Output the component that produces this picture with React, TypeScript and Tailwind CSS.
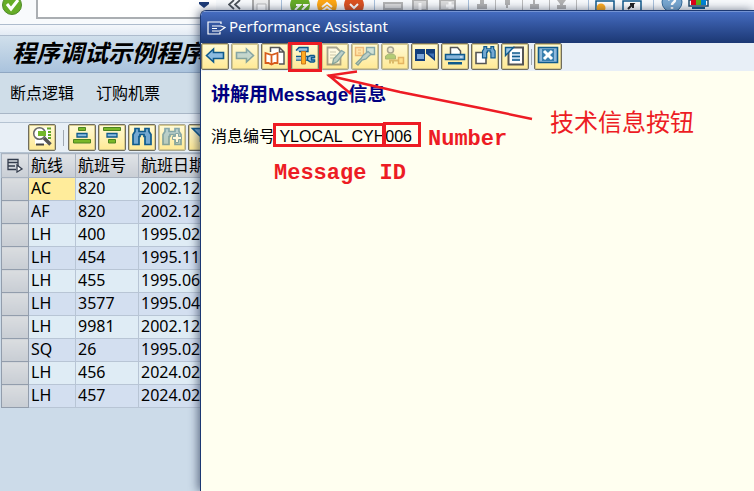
import type { ReactNode } from "react";

const NAVY = "#0f5a8c";
const SKY = "#9fc3e0";

function IconButton({ label, dim = false, children }: { label: string; dim?: boolean; children: ReactNode }) {
  return (
    <button
      type="button"
      aria-label={label}
      title={label}
      className={`h-[27px] w-7 shrink-0 overflow-hidden rounded-xs border bg-linear-to-b from-[#fffad6] to-[#ffe993] shadow-[inset_0_0_0_1px_#d5c88a] ${
        dim ? "border-[#aaa78f]" : "border-[#6f6c5e]"
      }`}
    >
      <svg viewBox="1 1 26 25" className={`block h-[25px] w-[26px] ${dim ? "opacity-50" : ""}`} fill="none">
        {children}
      </svg>
    </button>
  );
}

const Separator = () => <span className="h-4 w-px shrink-0 bg-[#a0a8b2]" />;

const BackIcon = () => (
  <path d="M5.5 12.5 12.5 6v3.5h10v6h-10V19Z" fill="#8bbbe0" stroke={NAVY} strokeWidth="1.6" />
);
const ForwardIcon = () => (
  <path d="M22.5 12.5 15.5 6v3.5h-10v6h10V19Z" fill="#8bbbe0" stroke={NAVY} strokeWidth="1.6" />
);
const BookIcon = () => (
  <>
    <path d="M9.500 9V4.500h9L23 9v12h-5" fill="#fff" />
    <path d="M9.500 9V4.500h9L23 9v12h-5M18.500 4.500V9H23" stroke="#555" strokeWidth="1.500" />
    <path d="m4.500 10 6 2 6-2v10h-3l-3 1.500-3-1.500h-3ZM10.500 12v9" fill="#fff" stroke="#d65a1a" strokeWidth="1.800" />
  </>
);
const ToolsIcon = () => (
  <>
    <path d="M5 13.500h12M5 17h12" stroke={NAVY} strokeWidth="1.400" />
    <path d="M5 14.500h13v2H5z" fill={SKY} />
    <path d="M23.500 12.500h-4l-3 1.500v3l3 2h4M23.500 12.500v2h-3v2.500h3v2" fill={SKY} stroke={NAVY} strokeWidth="1.500" />
    <path d="M5 7.500 8 4.500h9v4H8" fill={SKY} stroke={NAVY} strokeWidth="1.400" />
    <path d="M10.500 8.500h4v12.500h-4z" fill="#ffad22" stroke="#c9771a" />
  </>
);
const EditIcon = () => (
  <>
    <path d="M6.500 4.500h9l4 4v13h-13z" fill="#fff" stroke="#555" strokeWidth="1.800" />
    <path d="M9 9h6M9 12h6M9 15h4" stroke="#999" />
    <path d="m20.500 7.500 3 2-7 9-5 2.500 1-5Z" fill="#7eaed5" stroke={NAVY} strokeWidth="1.300" />
  </>
);
const StyleIcon = () => (
  <>
    <path d="M4.500 4.500h8v8h-8z" fill="#ffd38c" stroke="#db7b2a" strokeWidth="1.400" />
    <path d="M15.500 4.500h8v7h-8z" fill="#a5cfe8" stroke={NAVY} strokeWidth="1.400" />
    <path d="M7 7h3M7 10h3" stroke="#db7b2a" />
    <path d="m17 8.500 3 2.500-5 5-4 1-4 5-2-1.500 5-5 2-3Z" fill="#7eaed5" stroke={NAVY} strokeWidth="1.300" />
  </>
);
const UserKeyIcon = () => (
  <>
    <circle cx="9.500" cy="7" r="3" fill="#ddd" stroke="#555" strokeWidth="1.500" />
    <path d="M4.500 16v-3l3-2h5l2 2v3Z" fill="#69a832" stroke="#557a38" />
    <path d="M8 17.500h9M9 17.500v3M12 17.500v3" stroke="#b9882c" strokeWidth="2" />
    <path d="M17.500 14.500h5v6h-5z" fill="#ffd06b" stroke="#c97c1e" strokeWidth="1.500" />
  </>
);
const ApplicationIcon = () => (
  <>
    <path d="M4 6h10v12H4z" fill="#123f7d" />
    <path d="M6 11h7v5H6z" fill="#7ba6d8" />
    <path d="M14 6h10v12l-9-7.500Z" fill="#123f7d" />
    <path d="M17.500 10.500H23v4.500Z" fill="#3f72b8" />
    <path d="M14.500 6v12" stroke="#fff4b8" />
  </>
);
const PrinterIcon = () => (
  <>
    <path d="M9.500 11V4.500h7L19.500 8v3" fill="#fff" stroke="#555" strokeWidth="1.500" />
    <path d="M4.500 11.500h19v5h-19z" fill="#87b5db" stroke={NAVY} strokeWidth="1.500" />
    <path d="M19 14h2.500" stroke="#fff" />
    <path d="M7 19h14v2.500H7z" fill={NAVY} />
  </>
);
const Binoculars = () => (
  <path
    d="M7 4.500h4v3h6v-3h4v3l2 3v10h-6v-8h-1v-2h-4v2h-1v8H5v-10l2-3Z"
    fill="#75a9d2"
    stroke={NAVY}
    strokeWidth="1.700"
  />
);
const FindPageIcon = () => (
  <>
    <path d="M5 9.500h10v11H5z" fill="#fff" stroke="#555" strokeWidth="1.600" />
    <g transform="translate(8 0.500) scale(.7)">
      <Binoculars />
    </g>
  </>
);
const BinocularsPlusIcon = () => (
  <>
    <Binoculars />
    <path d="M17.500 9.500h3v3h3v3h-3v3h-3v-3h-3v-3h3z" fill="#fff" stroke={NAVY} />
  </>
);
const DocumentIcon = () => (
  <>
    <path d="M7.500 7V21.500H22V4.500H12" fill="#fff" stroke="#555" strokeWidth="2" />
    <path d="M11 10h8v8h-8z" fill="#c4dbef" />
    <path d="M11 10h8M11 13.500h8M11 17h8" stroke={NAVY} strokeWidth="1.300" />
    <path d="M4.500 4.500h8l-8 8Z" fill="#9bc7e8" stroke={NAVY} strokeWidth="1.400" />
  </>
);
const CloseIcon = () => (
  <>
    <path d="M4.500 4.500h19v15h-19z" fill="#8eb8db" stroke={NAVY} strokeWidth="1.600" />
    <path d="M8 6h12v12H8z" fill="#397fae" />
    <path d="m10 8 8 8M18 8l-8 8" stroke="#fff" strokeWidth="3" />
  </>
);
const DetailIcon = () => (
  <>
    <path d="M10 4h12v16H7v-5" fill="#fff" />
    <path d="M19 4.500h4M20 8h3M20 11h3M20 14h3" stroke="#62a629" strokeWidth="2" />
    <path d="M8 20.500h8" stroke="#444" strokeWidth="2" />
    <circle cx="11.500" cy="9.500" r="5.800" fill="#fff" stroke="#666" strokeWidth="1.500" />
    <path d="M10 7h8v5h-8z" fill="#72b72b" />
    <path d="m16 14 6.500 6.500" stroke="#555" strokeWidth="3.500" />
  </>
);
const AscendingIcon = () => (
  <>
    <path d="M10.500 3.500h7v3h-7z" fill="#79b728" stroke="#4c8420" />
    <path d="M9 9.500h10v3.500H9z" fill="#8dbde3" stroke={NAVY} strokeWidth="1.300" />
    <path d="M5.500 15.500h17v3.500h-17z" fill="#79b728" stroke="#4c8420" />
  </>
);
const DescendingIcon = () => (
  <>
    <path d="M5.500 3.500h17v3h-17z" fill="#79b728" stroke="#4c8420" />
    <path d="M9 9.500h10v3.500H9z" fill="#8dbde3" stroke={NAVY} strokeWidth="1.300" />
    <path d="M10.500 15.500h7v3.500h-7z" fill="#79b728" stroke="#4c8420" />
  </>
);
const FilterIcon = () => (
  <path d="M4.500 4.500h19l-7 8v8l-4-3v-5Z" fill="#75a9d2" stroke={NAVY} strokeWidth="1.600" />
);

/** Icons of the main system toolbar, whose lower part runs behind the dialog. */
function SystemIcons() {
  return (
    <svg viewBox="0 0 530 24" className="h-6 w-[530px] shrink-0" fill="none">
      <path d="M6 0 1 4.500 6 9M12 0 7 4.500 12 9" stroke="#4c5258" strokeWidth="1.700" />
      <path d="M25 0v14h16V0" fill="#eee" stroke="#aaa" strokeWidth="2" />
      <path d="M29 4h9v8h-9z" fill="#fff" stroke="#bbb" />
      <path d="M53.500 0v20M146.500 0v20M240.500 0v20M360.500 0v20M425.500 0v20" stroke="#a9c1dc" />
      <circle cx="72" cy="5" r="10" fill="#66ad26" />
      <path d="m67 10 5-5h-4M74 10l5-5h-4" stroke="#fff" strokeWidth="2" />
      <circle cx="99" cy="5" r="10" fill="#ffa713" />
      <path d="m94 7 5-4 5 4M94 11l5-4 5 4" stroke="#fff" strokeWidth="2" />
      <circle cx="126" cy="5" r="10" fill="#dc5120" />
      <path d="m122 4 4 4 4-4" stroke="#fff" strokeWidth="2" />
      <path d="M156 3h18v6h-18zM185 0h14v10h-14zM212 0h15v10h-15z" fill="#ddd" stroke="#b4b4b4" strokeWidth="2" />
      <path d="M192 3v8M222 2v7M218 6h8" stroke="#fff" strokeWidth="3" />
      <path d="M267.500 0v10M294.500 0v10M321.500 0v10M348.500 0v10" stroke="#bbb" />
      <path
        d="M252 0h4v4h3v5h-10V4h3zM277 0h5v5h-2v3h-2V5h-1zM305 0h2v4h4v5h-9V4h3zM329 0h9l-3 4v1h3v4h-9V5h3V4z"
        fill="#b2b2b2"
      />
      <path d="M368 1h18v12h-18zM395 1h18v12h-18z" fill="#fff" stroke={NAVY} strokeWidth="1.500" />
      <circle cx="373" cy="8" r="4.500" fill="#ffac20" />
      <path d="m400 9 5-5h-3m3 0v4" stroke="#222" strokeWidth="2" />
      <circle cx="444" cy="2" r="10" fill="#79a8d1" stroke="#376e9d" />
      <path d="M440 0q6-5 7 0c0 3-3 2-3 5m0 2v2" stroke="#fff" strokeWidth="2.500" />
      <path d="M461 0h19v6h-19z" fill="#fff" stroke="#254c6d" strokeWidth="1.500" />
      <path d="M463 0h5v5h-5z" fill="#e00018" />
      <path d="M468 0h5v5h-5z" fill="#65ae16" />
      <path d="M473 0h5v5h-5z" fill="#0084d4" />
      <path d="M464 8h13" stroke={NAVY} strokeWidth="2" />
    </svg>
  );
}

const flights = [
  ["AC", "820", "2002.12.20"],
  ["AF", "820", "2002.12.23"],
  ["LH", "400", "1995.02.28"],
  ["LH", "454", "1995.11.17"],
  ["LH", "455", "1995.06.06"],
  ["LH", "3577", "1995.04.28"],
  ["LH", "9981", "2002.12.21"],
  ["SQ", "26", "1995.02.28"],
  ["LH", "456", "2024.02.01"],
  ["LH", "457", "2024.02.01"],
];

function FlightTable() {
  const head = "h-6 border border-[#a9b3c0] bg-linear-to-b from-[#e0e3e7] to-[#c9ced5] p-0 pb-0.5 pl-0.5 text-left font-normal";
  const cell = "h-[23px] border border-[#b8c5d5] p-0 pb-0.5 pl-0.5";
  return (
    <table className="ml-px w-[240px] table-fixed border-collapse text-base leading-5">
      <colgroup>
        <col className="w-[27px]" />
        <col className="w-[47px]" />
        <col className="w-[63px]" />
        <col />
      </colgroup>
      <thead>
        <tr>
          <th className={head} aria-label="选择">
            <svg viewBox="0 0 18 16" className="ml-0.5 h-4 w-[18px]" fill="none" stroke="#333c4c" strokeWidth="1.300">
              <path d="M2 2.500h10v3H2zM2 5.500v7h8M2 9h7M12 5v4" />
              <path d="m11 8 5 4-5 3Z" fill="#fff" />
            </svg>
          </th>
          <th className={head}>航线</th>
          <th className={head}>航班号</th>
          <th className={head}>航班日期</th>
        </tr>
      </thead>
      <tbody>
        {flights.map(([airline, number, date], i) => (
          <tr key={i} className={i % 2 ? "bg-[#d3dff0]" : "bg-[#dfecf5]"}>
            <td className="h-[23px] border border-[#929dac] bg-linear-to-b from-[#dadde0] to-[#c8cdd4] p-0" />
            <td className={`${cell} ${i === 0 ? "bg-[#ffec9b]" : ""}`}>{airline}</td>
            <td className={cell}>{number}</td>
            <td className={cell}>{date}</td>
          </tr>
        ))}
      </tbody>
    </table>
  );
}

function MainWindow() {
  return (
    <div className="min-h-screen bg-[#ccdbe9]">
      <header className="flex h-6 items-start overflow-hidden bg-[#f8fafc]">
        <button type="button" aria-label="确认" className="ml-0.5 w-5 shrink-0">
          <svg viewBox="0 0 20 16" className="block h-4 w-5">
            <circle cx="10" cy="5" r="9.500" fill="#66ad27" stroke="#508b2b" />
            <path d="m5 4 4 5 7-9" fill="none" stroke="#fff" strokeWidth="3" />
          </svg>
        </button>
        <div className="ml-3.5 flex h-[19px] w-[180px] shrink-0 border-b-2 border-l-2 border-[#aaaeb2] bg-white">
          <input aria-label="命令" className="min-w-0 flex-1 bg-transparent px-1 outline-none" />
          <button type="button" aria-label="历史" className="flex w-[18px] pt-0.5">
            <svg viewBox="0 0 12 6" className="h-1.5 w-3">
              <path d="M1 0h10v2L6 6 1 2Z" fill="#1d3b77" />
            </svg>
          </button>
        </div>
        <div className="ml-3 flex shrink-0">
          <SystemIcons />
        </div>
      </header>
      <div className="h-3 border-y border-[#aebccd] bg-linear-to-b from-[#f4f7fb] to-[#e3ebf4]" />
      <h1 className="h-[37px] overflow-hidden whitespace-nowrap border-b border-[#8fa7c2] bg-linear-to-b from-[#d0dfeb] to-[#aac3dd] pl-3 text-2xl leading-[34px] font-bold text-black italic">
        程序调试示例程序
      </h1>
      <nav className="flex h-[41px] items-center gap-[22px] border-b border-[#a8b6c6] bg-[#cfdde8] pl-2.5 text-base">
        <button type="button">断点逻辑</button>
        <button type="button">订购机票</button>
      </nav>
      <div className="h-2 bg-[#e3ebf3]" />
      <div className="flex h-[31px] items-center gap-0.5 border-t border-b border-[#b5c3d2] bg-[#e8eff6] pl-7">
        <IconButton label="明细"><DetailIcon /></IconButton>
        <span className="flex w-2 justify-center pl-0.5"><Separator /></span>
        <IconButton label="升序"><AscendingIcon /></IconButton>
        <IconButton label="降序"><DescendingIcon /></IconButton>
        <IconButton label="查找"><Binoculars /></IconButton>
        <IconButton label="查找下一个" dim><BinocularsPlusIcon /></IconButton>
        <IconButton label="过滤"><FilterIcon /></IconButton>
      </div>
      <FlightTable />
    </div>
  );
}

function AssistantDialog() {
  return (
    <section
      role="dialog"
      aria-label="Performance Assistant"
      className="absolute top-2.5 right-0 bottom-0 left-[200px] flex flex-col overflow-hidden rounded-tl-md border-t border-l border-[#1c3872] bg-[#fffff0] shadow-[-2px_0_10px_rgba(20,35,65,0.6)]"
    >
      <header className="flex h-8 shrink-0 items-center gap-[3px] border-t border-[#7493d3] bg-linear-to-b from-[#456cc0] to-[#1c3874] pl-1.5 text-white">
        <svg viewBox="0 0 19 14" className="h-3.5 w-[19px]" fill="none" stroke="currentColor" strokeWidth="1.200">
          <path d="M14 3V1H1v12h12v-2M5 5h9l4 1.500-5 3.500H5M5 7.500h5" />
        </svg>
        <h2 className="pb-1 text-[15px] leading-5">Performance Assistant</h2>
      </header>
      <div role="toolbar" className="flex h-7 shrink-0 items-start gap-0.5 bg-[#e8eff7]">
        <IconButton label="返回"><BackIcon /></IconButton>
        <IconButton label="前进" dim><ForwardIcon /></IconButton>
        <IconButton label="应用帮助"><BookIcon /></IconButton>
        <IconButton label="技术信息"><ToolsIcon /></IconButton>
        <IconButton label="编辑" dim><EditIcon /></IconButton>
        <IconButton label="格式" dim><StyleIcon /></IconButton>
        <IconButton label="权限" dim><UserKeyIcon /></IconButton>
        <IconButton label="应用"><ApplicationIcon /></IconButton>
        <IconButton label="打印"><PrinterIcon /></IconButton>
        <IconButton label="查找"><FindPageIcon /></IconButton>
        <IconButton label="文档"><DocumentIcon /></IconButton>
        <span className="mt-1.5 flex"><Separator /></span>
        <IconButton label="关闭"><CloseIcon /></IconButton>
      </div>
      <article className="px-2.5 pt-3 font-['Liberation_Sans','Noto_Sans_CJK_SC',sans-serif]">
        <h3 className="text-[19px] leading-6 font-bold text-[#000080]">讲解用Message信息</h3>
        <p className="mt-[18px] text-base leading-6">消息编号 YLOCAL_CYH006</p>
      </article>
    </section>
  );
}

/** Red call-outs drawn over the dialog. */
function Annotations() {
  const note = "absolute whitespace-nowrap text-[#ed1c24]";
  const mono = "font-['Liberation_Mono',monospace] text-[22px] leading-6 font-bold";
  return (
    <div className="pointer-events-none absolute inset-0 overflow-hidden">
      <svg className="absolute top-0 left-0 h-[200px] w-[560px]" viewBox="0 0 560 200" fill="none" stroke="#ed1c24" strokeWidth="3">
        <path d="M289.500 43.500h31v27h-31zM274.500 124.500h109v21h-109zM384.500 123.500h35v22h-35z" />
        <path d="M532 119 480 108 400 92 328 75.500M357 71.500l-28 4 22 18.500" strokeWidth="2.500" />
      </svg>
      <span className={`${note} ${mono} top-[128px] left-[428px]`}>Number</span>
      <span className={`${note} ${mono} top-[162px] left-[274px]`}>Message ID</span>
      <span className={`${note} top-[106px] left-[550px] text-2xl leading-8`}>技术信息按钮</span>
    </div>
  );
}

export default function App() {
  return (
    <main className="relative min-h-screen overflow-hidden font-['Noto_Sans','Noto_Sans_CJK_SC',sans-serif] text-black">
      <MainWindow />
      <AssistantDialog />
      <Annotations />
    </main>
  );
}
